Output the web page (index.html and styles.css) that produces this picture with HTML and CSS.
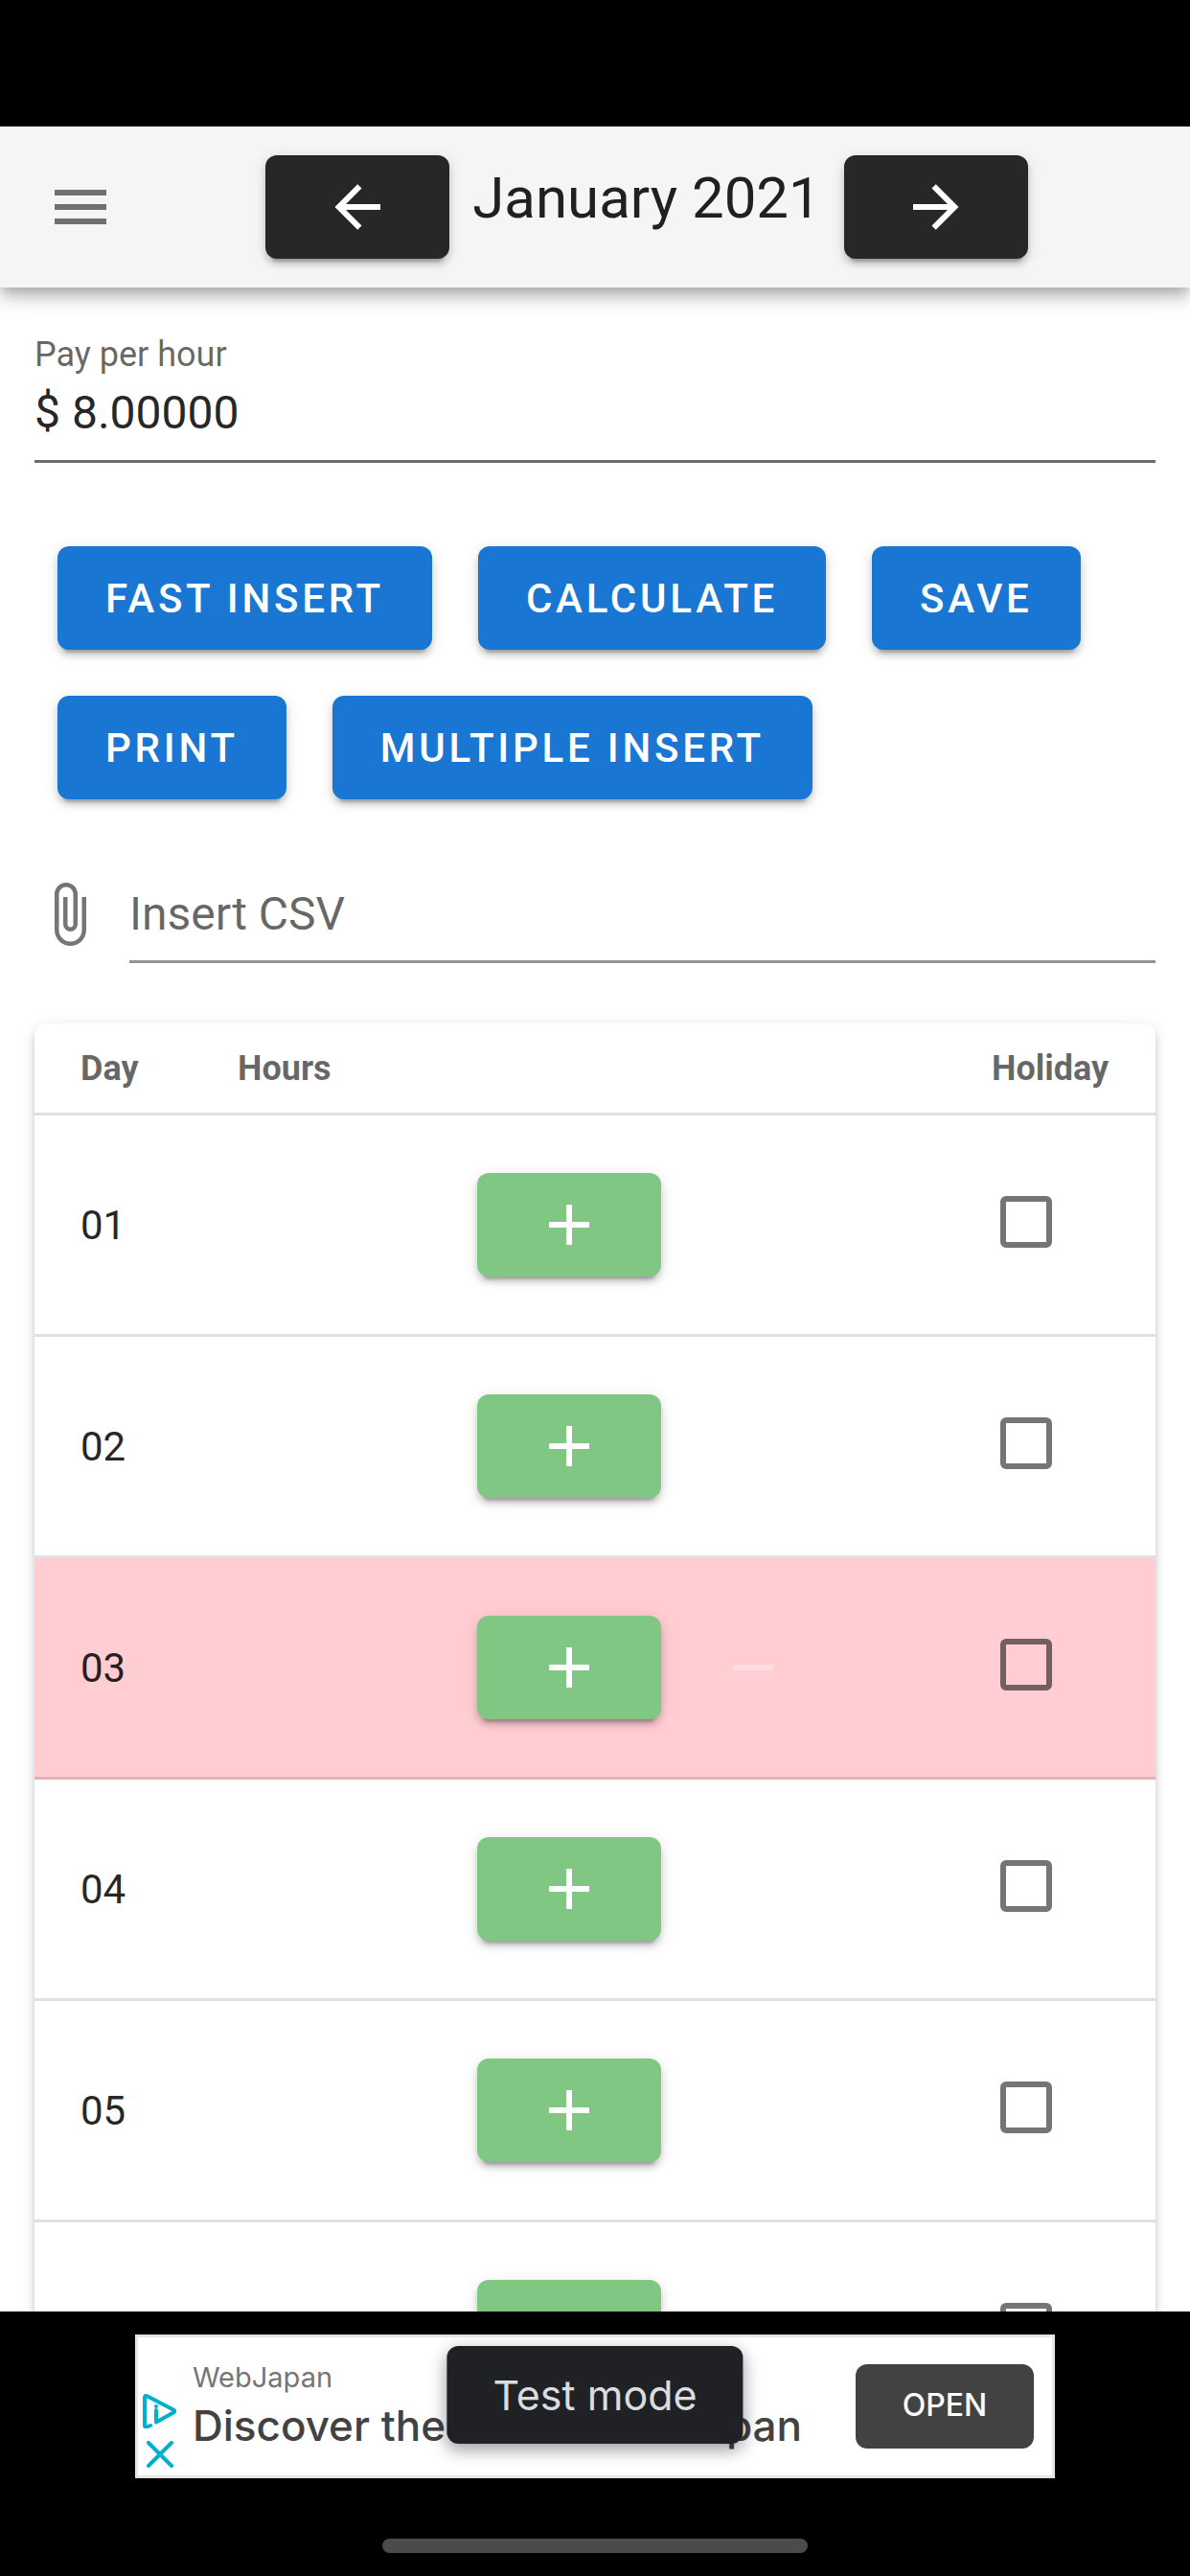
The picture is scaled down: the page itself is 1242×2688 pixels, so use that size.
FILE: index.html
```html
<!DOCTYPE html>
<html lang="en">
<head>
  <meta charset="UTF-8" />
  <meta name="viewport" content="width=device-width, initial-scale=1" />
  <title>January 2021</title>
  <link rel="stylesheet" href="styles.css">
</head>
<body>

<!-- shared icons -->
<svg class="icon-defs" aria-hidden="true">
  <symbol id="i-menu" viewBox="0 0 24 24"><path d="M3,6H21V8H3V6M3,11H21V13H3V11M3,16H21V18H3V16Z"/></symbol>
  <symbol id="i-left" viewBox="0 0 24 24"><path d="M20,11V13H8L13.5,18.5L12.08,19.92L4.16,12L12.08,4.08L13.5,5.5L8,11H20Z"/></symbol>
  <symbol id="i-right" viewBox="0 0 24 24"><path d="M4,11V13H16L10.5,18.5L11.92,19.92L19.84,12L11.92,4.08L10.5,5.5L16,11H4Z"/></symbol>
  <symbol id="i-plus" viewBox="0 0 24 24"><path d="M19,13H13V19H11V13H5V11H11V5H13V11H19V13Z"/></symbol>
  <symbol id="i-minus" viewBox="0 0 24 24"><path d="M19,13H5V11H19V13Z"/></symbol>
  <symbol id="i-clip" viewBox="0 0 24 24"><path d="M16.5,6V17.5A4,4 0 0,1 12.5,21.5A4,4 0 0,1 8.5,17.5V5A2.5,2.5 0 0,1 11,2.5A2.5,2.5 0 0,1 13.5,5V15.5A1,1 0 0,1 12.5,16.5A1,1 0 0,1 11.5,15.5V6H10V15.5A2.5,2.5 0 0,0 12.5,18A2.5,2.5 0 0,0 15,15.5V5A4,4 0 0,0 11,1A4,4 0 0,0 7,5V17.5A5.5,5.5 0 0,0 12.5,23A5.5,5.5 0 0,0 18,17.5V6H16.5Z"/></symbol>
</svg>

<div class="status-bar"></div>

<header class="app-bar">
  <button class="menu-btn" aria-label="Menu"><svg class="icon"><use href="#i-menu"/></svg></button>
  <div class="month-nav">
    <button class="btn dark" aria-label="Previous month"><svg class="icon"><use href="#i-left"/></svg></button>
    <h1 class="month">January 2021</h1>
    <button class="btn dark" aria-label="Next month"><svg class="icon"><use href="#i-right"/></svg></button>
  </div>
</header>

<main class="content">
  <div class="pay-field">
    <label for="pay">Pay per hour</label>
    <div class="pay-input">
      <span>$</span>
      <input type="text" id="pay" value="8.00000" inputmode="decimal" />
    </div>
  </div>

  <div class="actions">
    <button class="btn blue">FAST INSERT</button>
    <button class="btn blue">CALCULATE</button>
    <button class="btn blue">SAVE</button>
    <button class="btn blue">PRINT</button>
    <button class="btn blue">MULTIPLE INSERT</button>
  </div>

  <div class="file-field">
    <svg class="icon"><use href="#i-clip"/></svg>
    <div class="file-slot">
      <label for="csv">Insert CSV</label>
      <input type="file" id="csv" accept=".csv" />
    </div>
  </div>

  <table class="days">
    <thead>
      <tr><th class="col-day">Day</th><th>Hours</th><th class="col-holiday">Holiday</th></tr>
    </thead>
    <tbody>
      <tr>
        <td>01</td>
        <td><div class="hours">
          <button class="btn green" aria-label="Add hours"><svg class="icon"><use href="#i-plus"/></svg></button>
          <button class="btn flat" aria-label="Remove hours" disabled><svg class="icon"><use href="#i-minus"/></svg></button>
        </div></td>
        <td><input type="checkbox" aria-label="Holiday" /></td>
      </tr>
      <tr>
        <td>02</td>
        <td><div class="hours">
          <button class="btn green" aria-label="Add hours"><svg class="icon"><use href="#i-plus"/></svg></button>
          <button class="btn flat" aria-label="Remove hours" disabled><svg class="icon"><use href="#i-minus"/></svg></button>
        </div></td>
        <td><input type="checkbox" aria-label="Holiday" /></td>
      </tr>
      <tr class="sunday">
        <td>03</td>
        <td><div class="hours">
          <button class="btn green" aria-label="Add hours"><svg class="icon"><use href="#i-plus"/></svg></button>
          <button class="btn flat" aria-label="Remove hours" disabled><svg class="icon"><use href="#i-minus"/></svg></button>
        </div></td>
        <td><input type="checkbox" aria-label="Holiday" /></td>
      </tr>
      <tr>
        <td>04</td>
        <td><div class="hours">
          <button class="btn green" aria-label="Add hours"><svg class="icon"><use href="#i-plus"/></svg></button>
          <button class="btn flat" aria-label="Remove hours" disabled><svg class="icon"><use href="#i-minus"/></svg></button>
        </div></td>
        <td><input type="checkbox" aria-label="Holiday" /></td>
      </tr>
      <tr>
        <td>05</td>
        <td><div class="hours">
          <button class="btn green" aria-label="Add hours"><svg class="icon"><use href="#i-plus"/></svg></button>
          <button class="btn flat" aria-label="Remove hours" disabled><svg class="icon"><use href="#i-minus"/></svg></button>
        </div></td>
        <td><input type="checkbox" aria-label="Holiday" /></td>
      </tr>
      <tr>
        <td>06</td>
        <td><div class="hours">
          <button class="btn green" aria-label="Add hours"><svg class="icon"><use href="#i-plus"/></svg></button>
          <button class="btn flat" aria-label="Remove hours" disabled><svg class="icon"><use href="#i-minus"/></svg></button>
        </div></td>
        <td><input type="checkbox" aria-label="Holiday" /></td>
      </tr>
    </tbody>
  </table>
</main>

<footer class="bottom">
  <div class="ad">
    <div class="ad-marks">
      <svg class="ad-choices" viewBox="0 0 36 36">
        <path d="M8 33L4 34.500Q2 35 2 33V4Q2 1 5 2.500L32 16.500Q34.500 18 32 19.500L14 29.500V17"/>
        <circle cx="14" cy="13" r="2"/>
      </svg>
      <svg class="ad-close" viewBox="0 0 28 28"><path d="M2 2L26 26M26 2L2 26"/></svg>
    </div>
    <div class="ad-text">
      <div class="ad-brand">WebJapan</div>
      <div class="ad-title">Discover the Charms of Japan</div>
    </div>
    <button class="ad-open">OPEN</button>
    <div class="toast">Test mode</div>
  </div>
  <div class="home-bar"></div>
</footer>

</body>
</html>
```

FILE: styles.css
```css
* { box-sizing: border-box; }
body {
  margin: 0;
  height: 100vh;
  display: flex;
  flex-direction: column;
  overflow: hidden;
  background: #fff;
  color: rgba(0, 0, 0, 0.87);
  font-family: Roboto, "Liberation Sans", sans-serif;
}
button, input { font-family: inherit; }
button { cursor: pointer; }
.icon-defs { display: none; }
.icon {
  width: 72px;
  height: 72px;
  flex: none;
  fill: currentColor;
}

.status-bar {
  height: 132px;
  flex: none;
  background: #000;
}

/* top bar */
.app-bar {
  height: 168px;
  flex: none;
  display: flex;
  align-items: center;
  padding: 0 48px 0 12px;
  background: #f5f5f5;
  position: relative;
  z-index: 1;
  box-shadow: 0 6px 12px -3px rgba(0,0,0,.2), 0 12px 15px 0 rgba(0,0,0,.14), 0 3px 30px 0 rgba(0,0,0,.12);
}
.menu-btn {
  width: 144px;
  height: 144px;
  padding: 0;
  display: flex;
  align-items: center;
  justify-content: center;
  border: none;
  background: none;
  color: rgba(0, 0, 0, 0.54);
}
.month-nav {
  flex: 1;
  display: flex;
  align-items: center;
  justify-content: center;
  gap: 24px;
}
.month {
  margin: 0;
  padding-bottom: 18px;
  font-size: 60px;
  line-height: 72px;
  font-weight: 400;
}

.btn {
  min-width: 192px;
  height: 108px;
  padding: 0 50px;
  display: flex;
  align-items: center;
  justify-content: center;
  border: none;
  border-radius: 12px;
  color: #fff;
  font-size: 42px;
  font-weight: 500;
  letter-spacing: 0.09em;
  box-shadow: 0 9px 3px -6px rgba(0,0,0,.2), 0 6px 6px 0 rgba(0,0,0,.14), 0 3px 15px 0 rgba(0,0,0,.12);
}
.dark { background: #272727; }
.blue { background: #1976d2; }
.green { background: #81c784; }
.flat {
  background: none;
  box-shadow: none;
  color: rgba(255, 255, 255, 0.3);
}

.content {
  flex: 1;
  min-height: 0;
  overflow: hidden;
  padding: 46px 36px 0;
}

/* pay per hour */
.pay-field {
  border-bottom: 3px solid #6b6b6b;
  padding-bottom: 14px;
}
.pay-field label {
  display: block;
  font-size: 36px;
  line-height: 48px;
  color: rgba(0, 0, 0, 0.6);
}
.pay-input {
  display: flex;
  gap: 12px;
  font-size: 48px;
  line-height: 72px;
}
.pay-input input {
  flex: 1;
  min-width: 0;
  height: 72px;
  padding: 0;
  border: none;
  outline: none;
  background: none;
  color: inherit;
  font-size: 48px;
}

.actions {
  display: flex;
  flex-wrap: wrap;
  gap: 48px;
  margin: 87px 24px 84px;
}

/* csv upload */
.file-field {
  display: flex;
  align-items: flex-start;
  gap: 27px;
}
.file-field .icon { color: rgba(0, 0, 0, 0.54); }
.file-slot {
  flex: 1;
  position: relative;
  padding-bottom: 12px;
  border-bottom: 3px solid #949494;
}
.file-slot label {
  display: block;
  font-size: 48px;
  line-height: 72px;
  color: rgba(0, 0, 0, 0.6);
}
.file-slot input {
  position: absolute;
  inset: 0;
  width: 100%;
  opacity: 0;
}

/* days table */
.days {
  width: 100%;
  margin-top: 63px;
  table-layout: fixed;
  border-collapse: separate;
  border-spacing: 0;
  border-radius: 12px;
  background: #fff;
  box-shadow: 0 9px 3px -6px rgba(0,0,0,.2), 0 6px 6px 0 rgba(0,0,0,.14), 0 3px 15px 0 rgba(0,0,0,.12);
}
.days th, .days td {
  padding: 0 48px;
  text-align: left;
  border-bottom: 3px solid rgba(0, 0, 0, 0.12);
}
.days th {
  height: 96px;
  font-size: 36px;
  font-weight: 700;
  color: rgba(0, 0, 0, 0.6);
}
.days td {
  height: 231px;
  font-size: 42px;
}
.col-day { width: 164px; }
.col-holiday { width: 219px; }
.sunday { background: #ffcdd2; }
.hours {
  display: grid;
  grid-template-columns: 1fr auto 1fr;
}
.hours .green { grid-column: 2; }
.hours .flat { justify-self: start; }
.days input {
  appearance: none;
  display: block;
  width: 54px;
  height: 54px;
  margin: 0 0 6px 9px;
  border: 6px solid rgba(0, 0, 0, 0.54);
  border-radius: 6px;
}

/* ad banner */
.bottom {
  flex: none;
  background: #000;
  padding: 24px 36px;
  display: flex;
  flex-direction: column;
  align-items: center;
  gap: 63px;
}
.ad {
  position: relative;
  width: 100%;
  max-width: 960px;
  height: 150px;
  display: flex;
  align-items: center;
  padding: 0 19px 0 5px;
  background: #fff;
  border: 3px solid #e6e6e6;
  font-family: Inter, Roboto, sans-serif;
}
.ad-marks {
  align-self: flex-end;
  width: 36px;
  padding-bottom: 8px;
  display: flex;
  flex-direction: column;
  align-items: center;
  gap: 13px;
}
.ad-marks svg {
  fill: none;
  stroke: #00aecd;
  stroke-width: 4;
  stroke-linecap: round;
  stroke-linejoin: round;
}
.ad-marks circle { fill: #00aecd; stroke: none; }
.ad-choices { width: 36px; height: 36px; }
.ad-close { width: 28px; height: 28px; }
.ad-text {
  flex: 1;
  padding-left: 16px;
  white-space: nowrap;
}
.ad-brand {
  font-size: 29px;
  line-height: 40px;
  color: #757575;
}
.ad-title {
  font-size: 44px;
  line-height: 60px;
  font-weight: 500;
  color: #424242;
}
.ad-open {
  width: 186px;
  height: 88px;
  padding: 0 0 4px;
  border: none;
  border-radius: 12px;
  background: #424242;
  color: #fff;
  font-size: 32px;
  font-weight: 500;
}
.toast {
  position: absolute;
  top: 9px;
  left: 50%;
  transform: translateX(-50%);
  padding: 0 48px;
  border-radius: 12px;
  background: #202124;
  color: #dadce0;
  font-size: 43px;
  line-height: 102px;
  white-space: nowrap;
  box-shadow: 0 6px 18px rgba(0, 0, 0, 0.4);
}
.home-bar {
  width: 444px;
  height: 15px;
  border-radius: 8px;
  background: #4b4b4b;
}
```
